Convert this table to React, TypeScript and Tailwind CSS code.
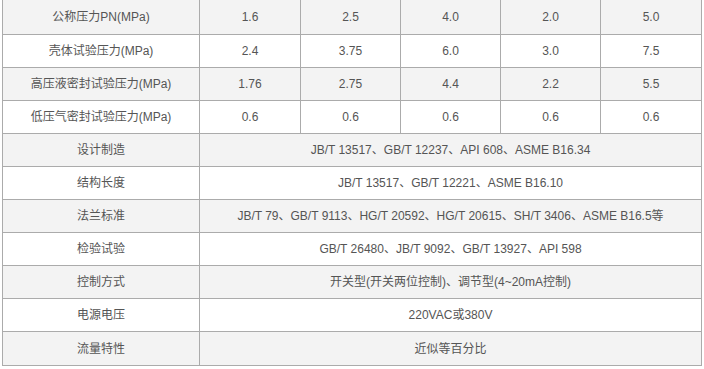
const pressureRows = [
    { label: "公称压力PN(MPa)", values: ["1.6", "2.5", "4.0", "2.0", "5.0"] },
    { label: "壳体试验压力(MPa)", values: ["2.4", "3.75", "6.0", "3.0", "7.5"] },
    { label: "高压液密封试验压力(MPa)", values: ["1.76", "2.75", "4.4", "2.2", "5.5"] },
    { label: "低压气密封试验压力(MPa)", values: ["0.6", "0.6", "0.6", "0.6", "0.6"] },
];

const specRows = [
    { label: "设计制造", value: "JB/T 13517、GB/T 12237、API 608、ASME B16.34" },
    { label: "结构长度", value: "JB/T 13517、GB/T 12221、ASME B16.10" },
    { label: "法兰标准", value: "JB/T 79、GB/T 9113、HG/T 20592、HG/T 20615、SH/T 3406、ASME B16.5等" },
    { label: "检验试验", value: "GB/T 26480、JB/T 9092、GB/T 13927、API 598" },
    { label: "控制方式", value: "开关型(开关两位控制)、调节型(4~20mA控制)" },
    { label: "电源电压", value: "220VAC或380V" },
    { label: "流量特性", value: "近似等百分比" },
];

const colWidths = ["w-[101px]", "w-[100px]", "w-[100px]", "w-[100px]", "flex-1"];

export default function App() {
    return (
        <div className="w-[704px] h-[369px] bg-white overflow-hidden">
            <div
                className="ml-[2px] w-[700px] border-x border-b border-[#ababab] text-[12px] text-[#555]"
                style={{ fontFamily: '"Liberation Sans", Arial, "Noto Sans CJK SC", sans-serif' }}
            >
                {pressureRows.map((row, i) => (
                    <div
                        key={row.label}
                        className={`flex border-b border-[#ababab] ${i === 0 ? "h-[35px]" : "h-[33px]"} ${i % 2 === 0 ? "bg-[#f3f3f3]" : "bg-white"}`}
                    >
                        <div className="w-[197px] border-r border-[#ababab] flex items-center justify-center">
                            {row.label}
                        </div>
                        {row.values.map((v, j) => (
                            <div
                                key={j}
                                className={`${colWidths[j]} ${j < 4 ? "border-r border-[#ababab]" : ""} flex items-center justify-center`}
                            >
                                {v}
                            </div>
                        ))}
                    </div>
                ))}
                {specRows.map((row, i) => (
                    <div
                        key={row.label}
                        className={`flex h-[33px] ${i < specRows.length - 1 ? "border-b border-[#ababab]" : "h-[32px]"} ${i % 2 === 0 ? "bg-[#f3f3f3]" : "bg-white"}`}
                    >
                        <div className="w-[197px] border-r border-[#ababab] flex items-center justify-center">
                            {row.label}
                        </div>
                        <div className="flex-1 flex items-center justify-center">{row.value}</div>
                    </div>
                ))}
            </div>
        </div>
    );
}
